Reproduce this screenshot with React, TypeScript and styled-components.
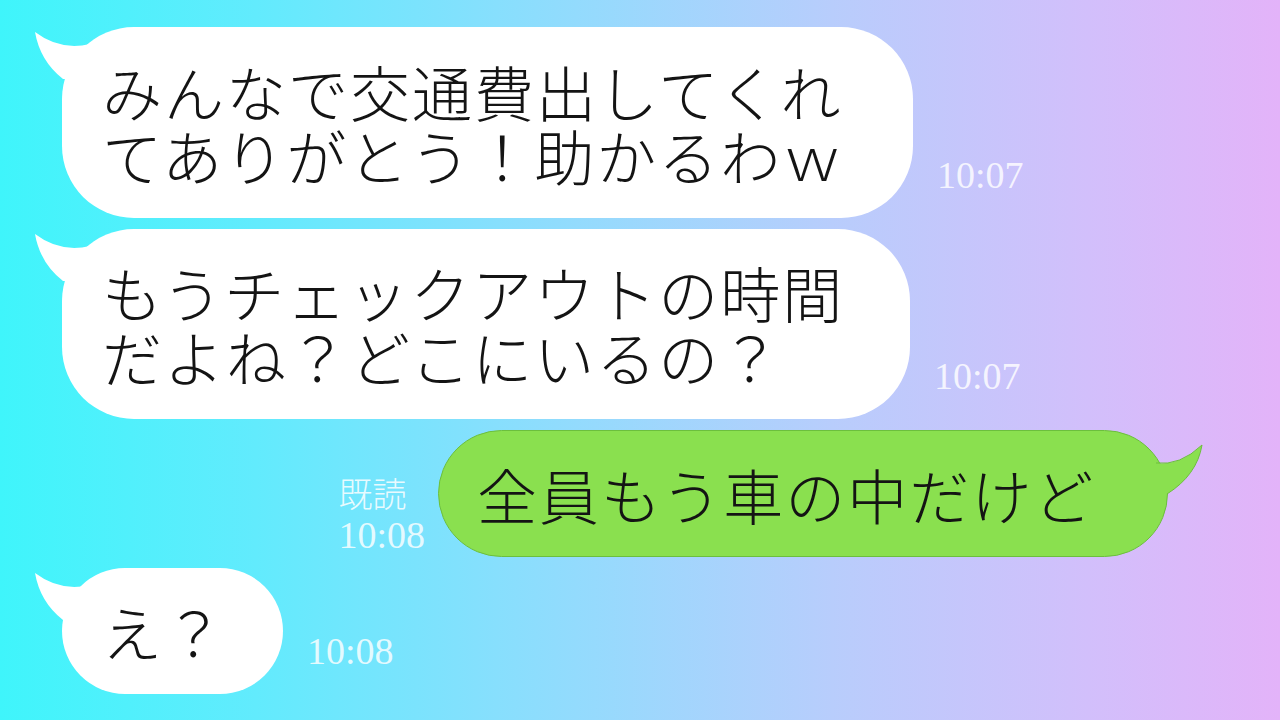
import styled, { createGlobalStyle } from "styled-components";

const GlobalStyle = createGlobalStyle`
    html, body {
        margin: 0;
        padding: 0;
    }
    body {
        font-family: "Noto Sans CJK JP", "Noto Sans", sans-serif;
    }
`;

const Screen = styled.div`
    width: 1280px;
    height: 720px;
    box-sizing: border-box;
    padding-top: 27px;
    display: flex;
    flex-direction: column;
    gap: 11px;
    overflow: hidden;
    background: linear-gradient(
        90deg,
        #3ff5fb 0%,
        #62ebfd 20%,
        #93dbfd 45%,
        #b8cdfc 65%,
        #d2bffb 85%,
        #e3b3f9 100%
    );
`;

const Row = styled.div<{ $out?: boolean }>`
    display: flex;
    align-items: flex-end;
    justify-content: ${(p) => (p.$out ? "flex-end" : "flex-start")};
    gap: ${(p) => (p.$out ? "13px" : "24px")};
    padding: ${(p) => (p.$out ? "0 112px 0 0" : "0 0 0 62px")};
`;

const Bubble = styled.div<{ $w: number; $h: number; $out?: boolean }>`
    position: relative;
    box-sizing: border-box;
    width: ${(p) => p.$w}px;
    height: ${(p) => p.$h}px;
    border-radius: ${(p) => Math.min(72, p.$h / 2)}px;
    background: ${(p) => (p.$out ? "#8ae04f" : "#ffffff")};
    border: ${(p) => (p.$out ? "1px solid #6cbf3d" : "none")};
    padding-left: ${(p) => (p.$out ? 38 : 40)}px;
    display: flex;
    flex-direction: column;
    justify-content: center;
`;

const Line = styled.div`
    position: relative;
    z-index: 1;
    font-family: "Noto Sans CJK JP", sans-serif;
    font-weight: 300;
    font-size: 60px;
    letter-spacing: 2px;
    line-height: 64px;
    color: #141414;
    white-space: nowrap;
`;

const Time = styled.div`
    font-family: "Liberation Serif", serif;
    font-size: 38px;
    line-height: 1;
    color: rgba(255, 255, 255, 0.82);
    margin-bottom: 24px;
`;

const Receipt = styled.div`
    display: flex;
    flex-direction: column;
    align-items: flex-start;
    margin-bottom: 3px;
`;

const ReadMark = styled.div`
    font-family: "Noto Sans CJK JP", sans-serif;
    font-weight: 300;
    font-size: 34px;
    line-height: 1.15;
    color: rgba(255, 255, 255, 0.85);
    margin-bottom: 4px;
`;

const TailLeft = styled.svg`
    position: absolute;
    left: -30px;
    top: 0;
    width: 64px;
    height: 52px;
`;

const TailRight = styled.svg`
    position: absolute;
    right: -36px;
    top: -1px;
    width: 68px;
    height: 66px;
`;

const InTail = () => (
    <TailLeft viewBox="0 0 64 52">
        <path d="M3 5 Q28 24 58 17 L64 17 L64 52 L31 52 Q8 34 3 5 Z" fill="#ffffff" />
    </TailLeft>
);

const OutTail = () => (
    <TailRight viewBox="0 0 68 66">
        <path
            d="M67 15 Q45 36 21 33 L0 33 L0 64 L32 64 Q62 45 67 15 Z"
            fill="#8ae04f"
        />
        <path d="M67 15 Q45 36 21 33 M32 64 Q62 45 67 15" fill="none" stroke="#6cbf3d" strokeWidth="1" />
    </TailRight>
);

export default function App() {
    return (
        <>
            <GlobalStyle />
            <Screen>
                <Row>
                    <Bubble $w={851} $h={191}>
                        <InTail />
                        <Line>みんなで交通費出してくれ</Line>
                        <Line>てありがとう！助かるわｗ</Line>
                    </Bubble>
                    <Time>10:07</Time>
                </Row>

                <Row>
                    <Bubble $w={848} $h={190}>
                        <InTail />
                        <Line>もうチェックアウトの時間</Line>
                        <Line>だよね？どこにいるの？</Line>
                    </Bubble>
                    <Time>10:07</Time>
                </Row>

                <Row $out>
                    <Receipt>
                        <ReadMark>既読</ReadMark>
                        <Time style={{ marginBottom: 0 }}>10:08</Time>
                    </Receipt>
                    <Bubble $w={730} $h={127} $out>
                        <OutTail />
                        <Line>全員もう車の中だけど</Line>
                    </Bubble>
                </Row>

                <Row>
                    <Bubble $w={221} $h={126}>
                        <InTail />
                        <Line>え？</Line>
                    </Bubble>
                    <Time>10:08</Time>
                </Row>
            </Screen>
        </>
    );
}
